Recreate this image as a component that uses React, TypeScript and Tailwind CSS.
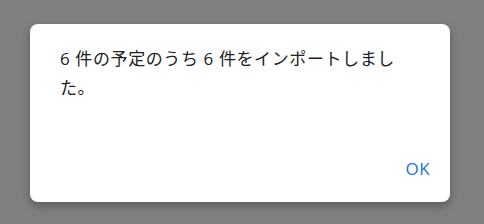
export default function App() {
  return (
    <div className="w-[484px] h-[224px] bg-[#808080] pt-6 pl-[30px]">
      <div className="w-[420px] h-[178px] bg-white rounded-lg shadow-[0_4px_10px_rgba(0,0,0,0.3)] flex flex-col">
        <p
          className="pt-[20px] pl-[30px] pr-4 text-[17px] leading-[29px] tracking-[0.6px] text-[#202124]"
          style={{ fontFamily: '"Open Sans", "Noto Sans CJK JP", sans-serif' }}
        >
          6 件の予定のうち 6 件をインポートしまし
          <br />
          た。
        </p>
        <div className="mt-auto flex justify-end pr-[20px] pb-[21px]">
          <button
            type="button"
            className="text-[17px] font-medium text-[#1a73e8] tracking-wide"
            style={{ fontFamily: '"Open Sans", "Noto Sans", sans-serif' }}
          >
            OK
          </button>
        </div>
      </div>
    </div>
  );
}
